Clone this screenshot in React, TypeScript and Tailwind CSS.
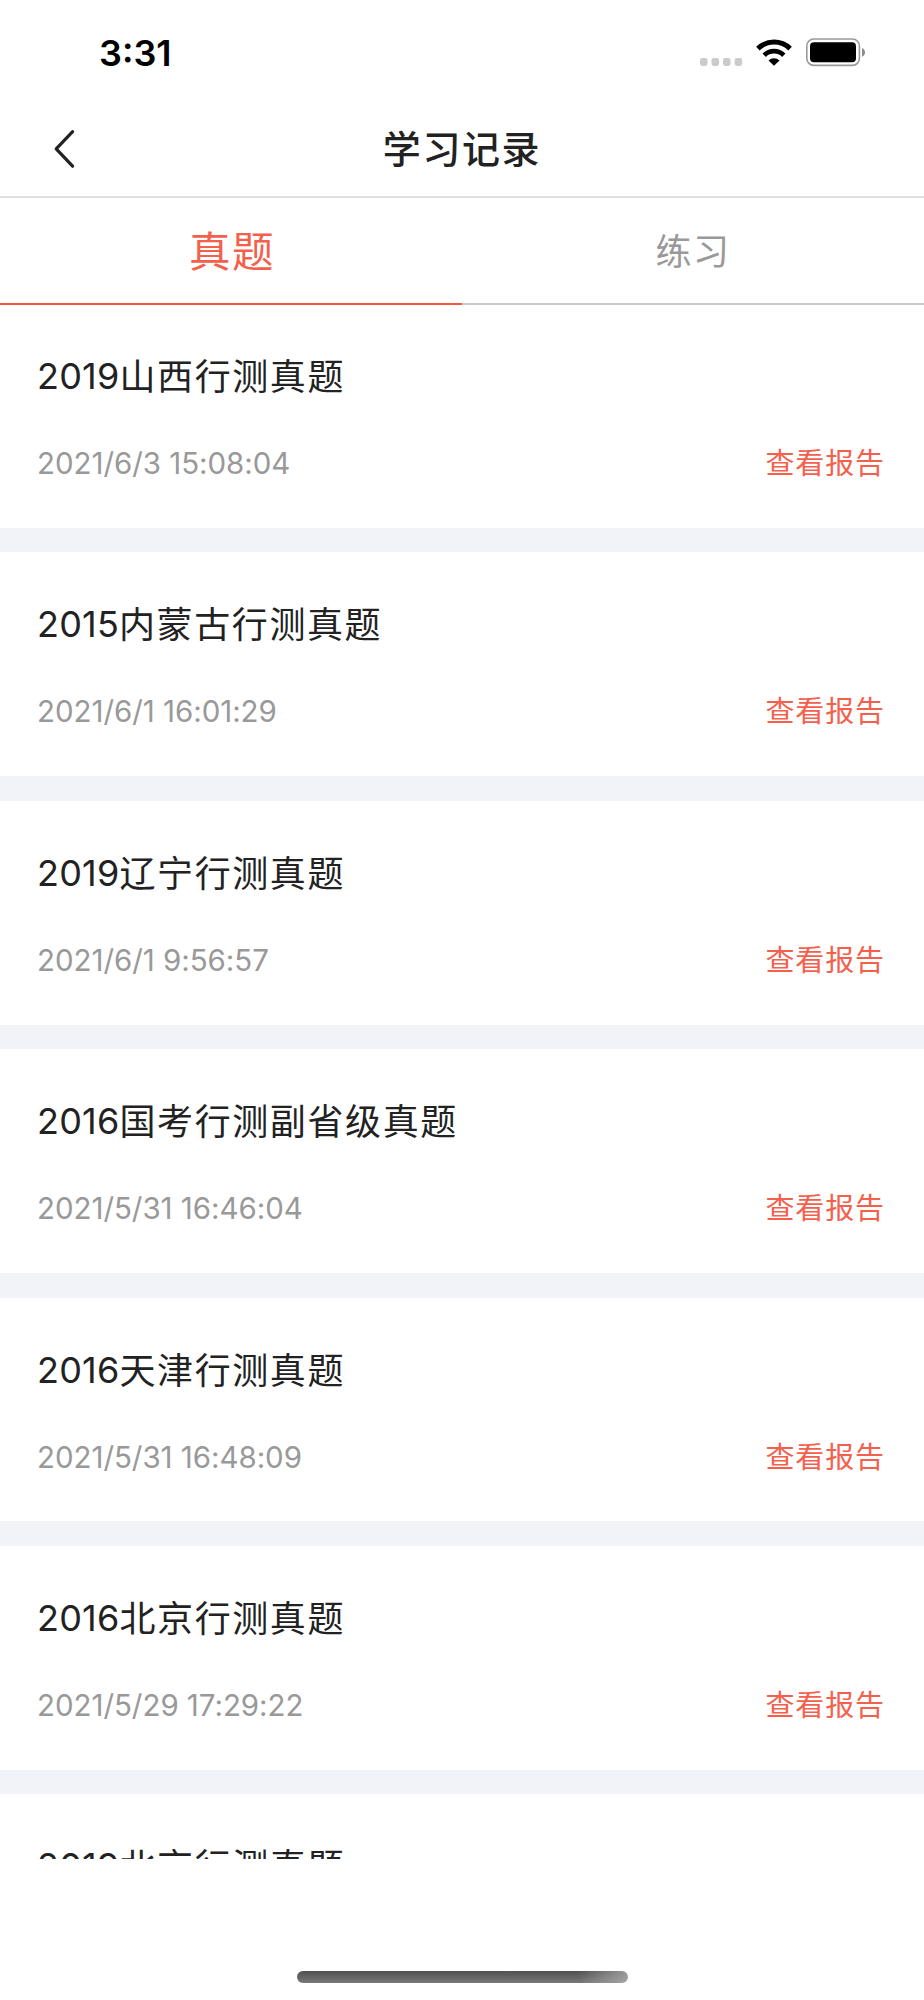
import { useState } from "react";
import clsx from "clsx";

const records = [
  { id: 1, year: "2019", name: "山西行测真题", time: "2021/6/3 15:08:04" },
  { id: 2, year: "2015", name: "内蒙古行测真题", time: "2021/6/1 16:01:29" },
  { id: 3, year: "2019", name: "辽宁行测真题", time: "2021/6/1 9:56:57" },
  { id: 4, year: "2016", name: "国考行测副省级真题", time: "2021/5/31 16:46:04" },
  { id: 5, year: "2016", name: "天津行测真题", time: "2021/5/31 16:48:09" },
  { id: 6, year: "2016", name: "北京行测真题", time: "2021/5/29 17:29:22" },
  { id: 7, year: "2019", name: "北京行测真题" },
];

const tabs = ["真题", "练习"];

const StatusBar = () => (
  <div className="flex h-[106px] shrink-0 items-start justify-between pr-[58px] pl-[99px]">
    <span className="mt-[31px] text-[36px] leading-[44px] font-semibold text-black">
      3:31
    </span>
    <svg className="mt-[34px]" width="168" height="36" viewBox="698 34 168 36" fill="none">
      {/* signal */}
      <g fill="#cbcbcb">
        <rect x="700" y="58" width="7.6" height="8" rx="2.4" />
        <rect x="711.5" y="58" width="7.6" height="8" rx="2.4" />
        <rect x="723" y="58" width="7.6" height="8" rx="2.4" />
        <rect x="734.6" y="58" width="7.6" height="8" rx="2.4" />
      </g>
      {/* wifi */}
      <path d="M757.9 48.6a23.2 23.2 0 0 1 32.2 0" stroke="#000" strokeWidth="5" />
      <path d="M764.2 55.2a14 14 0 0 1 19.6 0" stroke="#000" strokeWidth="4.8" />
      <path d="M774 65.8l-5.5-5.4a8.2 8.2 0 0 1 11 0z" fill="#000" />
      {/* battery */}
      <rect x="806.8" y="39" width="52.6" height="26.4" rx="7" stroke="#999" strokeWidth="1.6" />
      <rect x="810" y="42.3" width="46" height="20" rx="4" fill="#000" />
      <path d="M862 48c4 1.8 4 7 0 8.8z" fill="#8c8c8c" />
    </svg>
  </div>
);

const Header = () => (
  <header className="flex h-[92px] shrink-0 items-center border-b-2 border-[#e0e0e0] px-[49px] pb-[4px]">
    <button className="flex w-[60px]" aria-label="返回">
      <svg width="30" height="44" viewBox="0 0 30 44" fill="none">
        <path d="M23.6 4.6L7.2 21.9L23.6 39.2" stroke="#222" strokeWidth="3.2" strokeLinecap="round" strokeLinejoin="round" />
      </svg>
    </button>
    <h1 className="flex-1 text-center text-[38px] leading-[56px] font-medium tracking-[1.6px] text-[#222]">
      学习记录
    </h1>
    <div className="w-[60px]" />
  </header>
);

type RecordCardProps = { year: string; name: string; time?: string };

const RecordCard = ({ year, name, time }: RecordCardProps) => (
  <li className="flex h-[248.4px] shrink-0 flex-col">
    <div className="flex-1 pt-[47px] pr-[39px] pl-[37px]">
      <h2 className="flex text-[36px] leading-[52px] text-[#222]">
        <span className="-mt-px tracking-[0.2px]">{year}</span>
        <span className="tracking-[1.6px]">{name}</span>
      </h2>
      {time && (
        <div className="mt-[38px] flex h-[44px] items-center justify-between leading-[44px]">
          <time className="text-[29.5px] tracking-[-0.05px] text-[#999]">{time}</time>
          <button className="pt-[2px] text-[29px] tracking-[0.9px] text-[#f4604c]">查看报告</button>
        </div>
      )}
    </div>
    <div className="h-[24.6px] bg-[#f2f3f8]" />
  </li>
);

export default function App() {
  const [active, setActive] = useState(0);

  return (
    <div className="flex h-[2000px] w-[924px] flex-col bg-white font-['Inter','Noto_Sans_CJK_SC',sans-serif]">
      <StatusBar />
      <Header />

      <nav className="flex h-[107px] shrink-0">
        {tabs.map((tab, i) => (
          <button
            key={tab}
            onClick={() => setActive(i)}
            className={clsx(
              "w-1/2 border-b-2 pt-[3px]",
              i === active
                ? "border-[#fa5643] pl-[2px] text-[41.5px] tracking-[1.6px] text-[#f4604c]"
                : "border-[#cacaca] text-[36px] tracking-[1.4px] text-[#999]"
            )}
          >
            {tab}
          </button>
        ))}
      </nav>

      <ul className="-mt-px flex h-[1555px] shrink-0 flex-col overflow-hidden">
        {records.map((r) => (
          <RecordCard key={r.id} year={r.year} name={r.name} time={r.time} />
        ))}
      </ul>

      {/* home indicator */}
      <div className="mt-auto mb-[17px] h-[12px] w-[331px] self-center rounded-full bg-[linear-gradient(to_right,transparent_85%,rgba(190,190,190,0.65)),linear-gradient(to_bottom,#505050,#787878)]" />
    </div>
  );
}
